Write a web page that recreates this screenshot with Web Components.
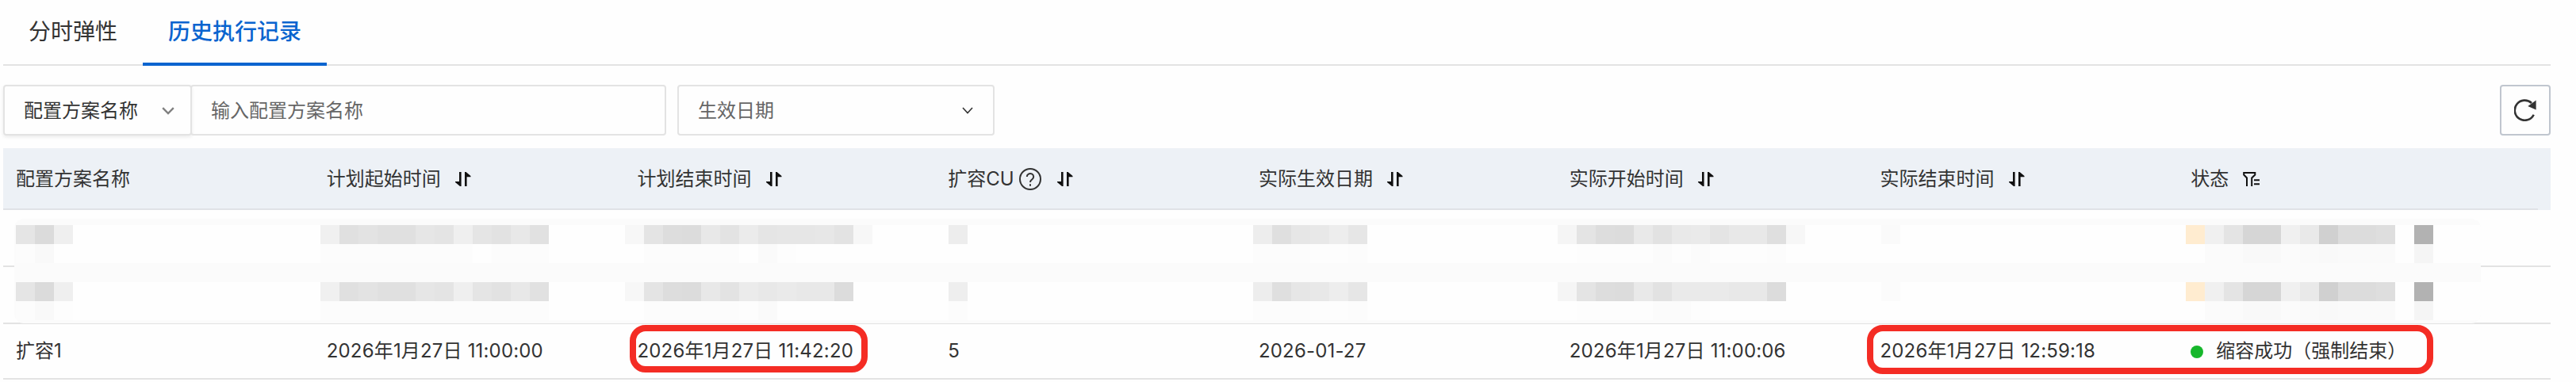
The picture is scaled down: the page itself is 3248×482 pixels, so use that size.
<!DOCTYPE html>
<html lang="zh-CN">
<head>
<meta charset="utf-8">
<title>历史执行记录</title>
<style>
   body {
      margin: 0;
      background: #fefefe;
      color: #333;
      font: 24px/36px Inter, "Noto Sans CJK SC", sans-serif;
   }
</style>
</head>
<body>
<history-page></history-page>

<script>
function template(html) {
   const element = document.createElement('template');
   element.innerHTML = html;
   return element;
}

class BaseElement extends HTMLElement {
   constructor() {
      super();
      this.attachShadow({mode: 'open'});
      this.shadowRoot.append(this.constructor.template.content.cloneNode(true));
   }
}

const icons = {
   sort: `<svg width="20" height="18" viewBox="0 0 20 18" fill="#111">
      <path d="M5 0h2.600v18H6L0 13v-1h5zM12 0h1.600L19.500 5v1.200h-4.900V18H12z"/></svg>`,
   filter: `<svg width="21" height="18" viewBox="0 0 21 18" fill="none" stroke="#111" stroke-width="2">
      <path d="M5 18V7.500L1.200 3.500V1H15.300V3.500L11.200 7.500V18M14 10.300h7M14 15.200h7"/></svg>`,
   down: `<svg width="16" height="10" viewBox="0 0 16 10" fill="none" stroke="currentColor" stroke-width="2.400">
      <path d="M1.200 1.200L8 8L14.800 1.200"/></svg>`,
   'down-thin': `<svg width="14" height="9" viewBox="0 0 14 9" fill="none" stroke="currentColor" stroke-width="1.600">
      <path d="M1 1L7 7.500L13 1"/></svg>`,
   help: `<svg width="28" height="28" viewBox="0 0 28 28" fill="none" stroke="#333" stroke-width="2">
      <circle cx="14" cy="14" r="13"/><path d="M9.800 11a4.200 4 0 1 1 6.500 3.300q-2.300 1.300-2.300 3.700"/><path d="M14 20.300v2.400"/></svg>`,
   refresh: `<svg width="28" height="28" viewBox="0 0 28 28" fill="none" stroke="#333" stroke-width="2.600">
      <path d="M24.700 19.700A12.600 12.600 0 1 1 22 5"/><path d="M27.600 1.500v12L17.300 9z" fill="#333" stroke="none"/></svg>`
};

class UiIcon extends HTMLElement {
   constructor() {
      super();
      this.attachShadow({mode: 'open'});
   }

   connectedCallback() {
      this.shadowRoot.innerHTML = `
         <style>
            :host { display: inline-flex; flex: none; }
            svg { display: block; }
         </style>${icons[this.getAttribute('name')]}`;
   }
}

class UiTab extends BaseElement {
   static template = template(`
      <style>
         :host {
            box-sizing: border-box;
            height: 83px;
            padding: 22px 32px 0;
            font-size: 28px;
         }
         :host([active]) {
            color: #0a64cf;
            font-weight: 500;
            border-bottom: 4px solid #0a64cf;
         }
      </style>
      <slot></slot>`);
}

class UiTabs extends BaseElement {
   static template = template(`
      <style>
         :host {
            display: flex;
            height: 83px;
            box-shadow: inset 0 -2px #e3e3e3;
         }
      </style>
      <slot></slot>`);
}

class UiField extends BaseElement {
   static template = template(`
      <style>
         :host {
            box-sizing: border-box;
            display: flex;
            align-items: center;
            justify-content: space-between;
            height: 64px;
            padding: 1px 24px 0;
            border: 2px solid #e3e3e3;
            border-radius: 4px;
            color: #666;
         }
      </style>
      <slot></slot><slot name="icon"></slot>`);
}

class UiButton extends BaseElement {
   static template = template(`
      <style>
         :host {
            box-sizing: border-box;
            display: flex;
            align-items: center;
            justify-content: center;
            width: 64px;
            height: 64px;
            border: 2px solid #c0c6cf;
            border-radius: 4px;
         }
      </style>
      <slot></slot>`);
}

class UiCell extends BaseElement {
   static template = template(`
      <style>
         :host {
            display: flex;
            align-items: center;
            padding-left: 16px;
            white-space: nowrap;
         }
         :host([time]) { letter-spacing: .17px; }
      </style>
      <slot></slot>`);
}

class UiRow extends BaseElement {
   static template = template(`
      <style>
         :host {
            box-sizing: border-box;
            display: grid;
            grid-template-columns: repeat(7, 391.75px) 1fr;
            height: 72px;
            border-bottom: 2px solid #e3e3e3;
         }
         :host([head]) {
            height: 78px;
            border: 0;
            background: linear-gradient(#e0e2e6, #e0e2e6) 0 100% / 3196px 2px no-repeat #edf1f6;
         }
         :host([last]) { height: 70px; }
      </style>
      <slot></slot>`);
}

class StatusDot extends BaseElement {
   static template = template(`
      <style>
         :host {
            width: 16px;
            height: 16px;
            margin: 2px 16px 0 0;
            border-radius: 50%;
            background: #16b72b;
         }
      </style>`);
}

// Frame drawn over a table row
class MarkFrame extends BaseElement {
   static template = template(`
      <style>
         :host {
            position: absolute;
            box-sizing: border-box;
            border: 8px solid #f42c24;
            border-radius: 20px;
         }
      </style>`);
}

const TILE = 24;
const dates = 'f0 e0 e3 e0 e0 e6 e4 ef e5 e2 e8 e1';
const state = 'ffecd0 f0 e4 d6 d6 f0 e9 d0 dc dc de';
// [first tile, colours]
const masks = [
   [
      [0, 'e5 db ef'], [16, dates],
      [32, 'f7 e4 dd dc e8 e3 eb e5 e6 e6 e7 e3 f7'],
      [49, 'ed'], [65, 'ed df e6 e8 ed e6'],
      [81, 'f5 e4 dd dc e9 e2 e9 ea e4 e8 e8 df f7'],
      [98, 'fa'], [114, state], [126, 'b2']
   ],
   [
      [0, 'fc f9'], [16, 'fc fc fc fc fc fc fc fc fe fc fc fc'],
      [33, 'fc fc fc fc fc fe fa fd'],
      [65, 'fc fc fc fd fd fc'], [82, 'fd fd fd fd fb fd fb fd fd fd fc'],
      [115, 'fb fb f9 f9 fb fa f9 fa fa fa'], [126, 'f5']
   ],
   [],
   [
      [0, 'e5 db ef'], [16, dates],
      [32, 'f7 e4 dd dc e8 e3 eb e8 ea e8 e8 dc'],
      [49, 'ee'], [65, 'ed df e6 e8 ed e6'],
      [81, 'f5 e4 dd dc e9 e2 ea ea ea e8 e8 dc'],
      [98, 'fb'], [114, state], [126, 'b2']
   ],
   [
      [0, 'fc f9 fd'], [16, 'fc fc fc fc fc fc fc fc fc fc fc fc'],
      [33, 'fc fc fc fc fc fd fa'], [49, 'fc'],
      [65, 'fc fc fc fd fd fc'], [82, 'fd fd fd fd fb fb fd'],
      [115, 'fb fb f9 f9 fb fa f9 fa fa fa'], [126, 'f5']
   ]
];

class MaskedRows extends HTMLElement {
   constructor() {
      super();
      this.attachShadow({mode: 'open'});
      const rects = masks.map((runs, row) => {
         const y = 8 + row * TILE;
         const back = runs.length ? `<rect x="2" y="${y}" width="3108" height="24" fill="#fefefe"/>` : '';
         return back + runs.map(([start, colors]) => colors.split(' ').map((color, i) => {
            const fill = color.length === 2 ? color.repeat(3) : color;
            return `<rect x="${2 + (start + i) * TILE}" y="${y}" width="24" height="24" fill="#${fill}"/>`;
         }).join('')).join('');
      }).join('');
      this.shadowRoot.innerHTML = `
         <style>
            :host {
               position: absolute;
               left: 18px;
               top: 276px;
               width: 3110px;
               height: 132px;
               overflow: hidden;
               border-radius: 12px;
               background: #fbfbfb;
            }
            svg { display: block; }
         </style>
         <svg width="3110" height="132" shape-rendering="crispEdges">${rects}</svg>`;
   }
}

class HistoryPage extends BaseElement {
   static template = template(`
      <style>
         :host {
            display: block;
            position: relative;
            box-sizing: border-box;
            height: 482px;
            padding: 0 32px 0 4px;
            overflow: hidden;
         }
         .filters {
            display: flex;
            padding: 24px 0 16px;
         }
         .kind {
            width: 238px;
            padding-right: 20px;
            color: #333;
            box-shadow: 0 2px 4px rgba(0, 0, 0, .08);
         }
         .kind ui-icon { color: #808080; }
         .name { width: 600px; margin-left: -2px; }
         .date { width: 400px; margin-left: 14px; }
         .date ui-icon { margin-right: 1px; color: #333; }
         ui-button { margin-left: auto; }
         .sort { margin-left: 18px; }
         .help { margin-left: 6px; }
         .help + .sort { margin-left: 20px; }
         .end { left: 794px; top: 410px; width: 300px; height: 60px; }
         .result { left: 2354px; top: 410px; width: 714px; height: 62px; }
      </style>
      <ui-tabs>
         <ui-tab>分时弹性</ui-tab>
         <ui-tab active>历史执行记录</ui-tab>
      </ui-tabs>
      <div class="filters">
         <ui-field class="kind">配置方案名称<ui-icon slot="icon" name="down"></ui-icon></ui-field>
         <ui-field class="name">输入配置方案名称</ui-field>
         <ui-field class="date">生效日期<ui-icon slot="icon" name="down-thin"></ui-icon></ui-field>
         <ui-button><ui-icon name="refresh"></ui-icon></ui-button>
      </div>
      <ui-row head>
         <ui-cell>配置方案名称</ui-cell>
         <ui-cell>计划起始时间<ui-icon class="sort" name="sort"></ui-icon></ui-cell>
         <ui-cell>计划结束时间<ui-icon class="sort" name="sort"></ui-icon></ui-cell>
         <ui-cell>扩容CU<ui-icon class="help" name="help"></ui-icon><ui-icon class="sort" name="sort"></ui-icon></ui-cell>
         <ui-cell>实际生效日期<ui-icon class="sort" name="sort"></ui-icon></ui-cell>
         <ui-cell>实际开始时间<ui-icon class="sort" name="sort"></ui-icon></ui-cell>
         <ui-cell>实际结束时间<ui-icon class="sort" name="sort"></ui-icon></ui-cell>
         <ui-cell>状态<ui-icon class="sort" name="filter"></ui-icon></ui-cell>
      </ui-row>
      <ui-row></ui-row>
      <ui-row></ui-row>
      <ui-row last>
         <ui-cell>扩容1</ui-cell>
         <ui-cell time>2026年1月27日 11:00:00</ui-cell>
         <ui-cell time>2026年1月27日 11:42:20</ui-cell>
         <ui-cell>5</ui-cell>
         <ui-cell time>2026-01-27</ui-cell>
         <ui-cell time>2026年1月27日 11:00:06</ui-cell>
         <ui-cell time>2026年1月27日 12:59:18</ui-cell>
         <ui-cell><status-dot></status-dot>缩容成功（强制结束）</ui-cell>
      </ui-row>
      <masked-rows></masked-rows>
      <mark-frame class="end"></mark-frame>
      <mark-frame class="result"></mark-frame>`);
}

window.customElements.define('ui-icon', UiIcon);
window.customElements.define('ui-tab', UiTab);
window.customElements.define('ui-tabs', UiTabs);
window.customElements.define('ui-field', UiField);
window.customElements.define('ui-button', UiButton);
window.customElements.define('ui-cell', UiCell);
window.customElements.define('ui-row', UiRow);
window.customElements.define('status-dot', StatusDot);
window.customElements.define('mark-frame', MarkFrame);
window.customElements.define('masked-rows', MaskedRows);
window.customElements.define('history-page', HistoryPage);
</script>
</body>
</html>
